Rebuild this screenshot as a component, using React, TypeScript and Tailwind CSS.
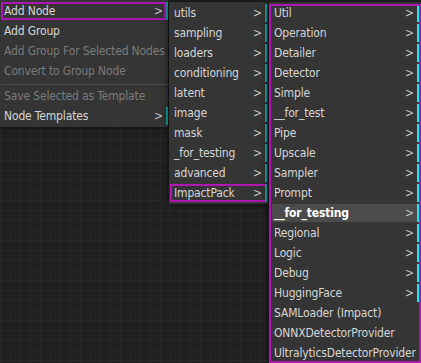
import React from 'react';

type Entry = {
  label: string;
  sub?: boolean;
  disabled?: boolean;
  active?: boolean;
  boxed?: boolean;
  separator?: boolean;
};

const mainMenu: Entry[] = [
  { label: 'Add Node', sub: true, boxed: true },
  { label: 'Add Group' },
  { label: 'Add Group For Selected Nodes', disabled: true },
  { label: 'Convert to Group Node', disabled: true },
  { label: '', separator: true },
  { label: 'Save Selected as Template', disabled: true },
  { label: 'Node Templates', sub: true },
];

const categories: Entry[] = [
  { label: 'utils', sub: true },
  { label: 'sampling', sub: true },
  { label: 'loaders', sub: true },
  { label: 'conditioning', sub: true },
  { label: 'latent', sub: true },
  { label: 'image', sub: true },
  { label: 'mask', sub: true },
  { label: '_for_testing', sub: true },
  { label: 'advanced', sub: true },
  { label: 'ImpactPack', sub: true, boxed: true },
];

const impactPack: Entry[] = [
  { label: 'Util', sub: true },
  { label: 'Operation', sub: true },
  { label: 'Detailer', sub: true },
  { label: 'Detector', sub: true },
  { label: 'Simple', sub: true },
  { label: '__for_test', sub: true },
  { label: 'Pipe', sub: true },
  { label: 'Upscale', sub: true },
  { label: 'Sampler', sub: true },
  { label: 'Prompt', sub: true },
  { label: '__for_testing', sub: true, active: true },
  { label: 'Regional', sub: true },
  { label: 'Logic', sub: true },
  { label: 'Debug', sub: true },
  { label: 'HuggingFace', sub: true },
  { label: 'SAMLoader (Impact)' },
  { label: 'ONNXDetectorProvider' },
  { label: 'UltralyticsDetectorProvider' },
];

const MenuRow = ({ item, bar, wrapBox }: { item: Entry; bar: string; wrapBox?: boolean }) => {
  if (item.separator) {
    return (
      <div className="py-[2px]">
        <div className="h-[1px] bg-[#4d4d4d]" />
      </div>
    );
  }
  const text = item.disabled
    ? 'text-[#7b7b7b]'
    : item.active
    ? 'text-white font-bold'
    : 'text-[#d6d6d6]';
  return (
    <div
      className={`flex h-[18px] mb-[2px] ${item.active ? 'bg-[#4b4b4b]' : ''} ${
        item.boxed && wrapBox ? 'shadow-[inset_0_0_0_2px_#b016b4]' : ''
      }`}
    >
      <div
        className={`flex-1 flex items-center justify-between pl-[3px] pr-[3px] leading-[18px] whitespace-nowrap ${text} ${
          item.boxed && !wrapBox ? 'shadow-[inset_0_0_0_2px_#b016b4]' : ''
        }`}
      >
        <span>{item.label}</span>
        {item.sub && <span className="text-[#c4c4c4] font-normal">&gt;</span>}
      </div>
      {item.sub && <div className={`w-[2px] ${bar}`} />}
    </div>
  );
};

export default function App() {
  return (
    <div
      className="relative w-[421px] h-[363px] overflow-hidden bg-[#212121] bg-[linear-gradient(#282828_1px,transparent_1px),linear-gradient(90deg,#282828_1px,transparent_1px)] [background-size:10px_10px] text-[12px] tracking-[-0.15px]"
      style={{ fontFamily: '"DejaVu Sans Condensed", "Liberation Sans", Arial, sans-serif' }}
    >
      {/* main context menu */}
      <div className="absolute left-0 top-0 w-[168px] pt-[2px] bg-[#353535] shadow-[0_0_8px_rgba(0,0,0,0.7)]">
        {mainMenu.map((m, i) => (
          <div key={i} className="ml-[1px]">
            <MenuRow item={m} bar="bg-[#14a8a8]" />
          </div>
        ))}
      </div>

      {/* Add Node submenu */}
      <div className="absolute left-[169px] top-[2px] w-[99px] pt-[2px] bg-[#353535] shadow-[0_0_8px_rgba(0,0,0,0.7)]">
        {categories.map((m, i) => (
          <div key={i} className="ml-[1px] mr-[1px] [&>div]:pl-[1px]">
            <MenuRow item={m} bar="bg-[#14a8a8]" wrapBox />
          </div>
        ))}
      </div>

      {/* ImpactPack submenu */}
      <div className="absolute left-[269px] top-[2px] w-[152px] pt-[2px] bg-[#353535] shadow-[0_0_8px_rgba(0,0,0,0.7)]">
        {impactPack.map((m, i) => (
          <div key={i} className="ml-[3px] mr-[2px] [&>div>div:first-child]:pl-[2px]">
            <MenuRow item={m} bar="bg-[#1ee6ea]" />
          </div>
        ))}
        <div className="absolute left-0 right-0 top-[2px] bottom-[1px] border-2 border-[#b016b4] pointer-events-none" />
      </div>
    </div>
  );
}
